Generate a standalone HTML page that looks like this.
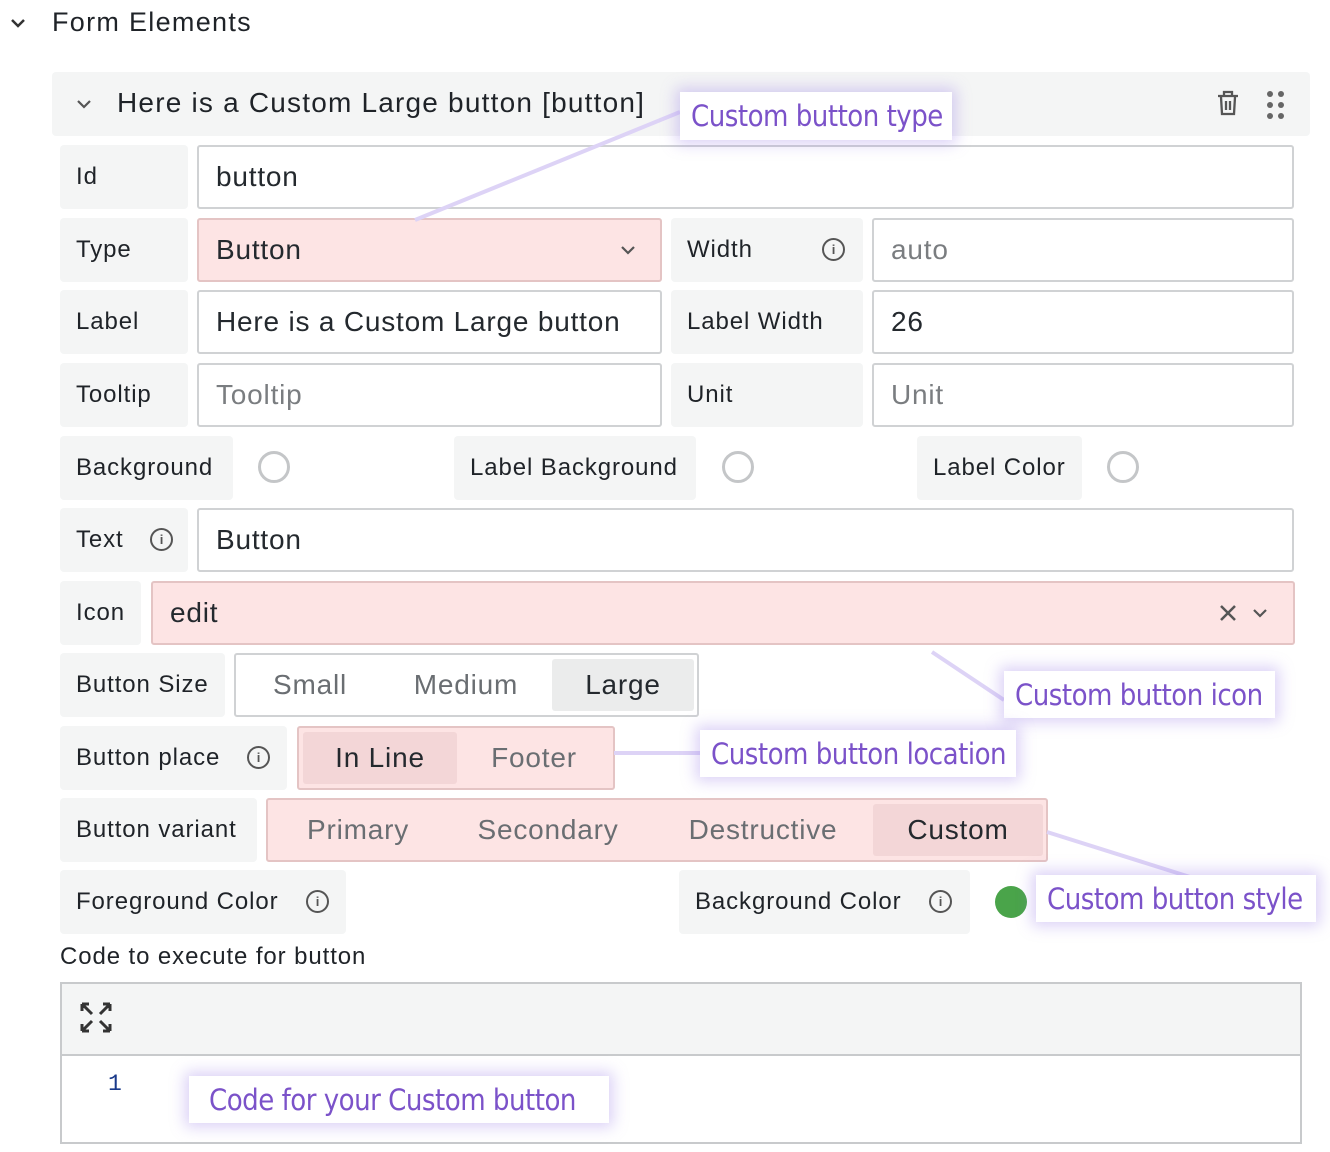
<!DOCTYPE html>
<html><head><meta charset="utf-8">
<style>
*{box-sizing:border-box;margin:0;padding:0}
body{width:1330px;height:1152px;background:#fff;position:relative;overflow:hidden;font-family:"Liberation Sans",sans-serif;color:#24292e}
.a{position:absolute}
.lb{position:absolute;background:#f4f5f5;border-radius:4px;font-size:24px;letter-spacing:0.9px;color:#1f2328;display:flex;align-items:center;padding-left:16px;height:64px;white-space:nowrap}
.in{position:absolute;border:2px solid #d0d2d4;border-radius:3px;background:#fff;font-size:28px;letter-spacing:0.8px;display:flex;align-items:center;padding-left:17px;height:64px;color:#24292e;white-space:nowrap}
.pk{background:#fde4e4;border-color:#e4c4c4}
.ph{color:#7a7d80}
.info{display:inline-block;width:23px;height:23px;border:2px solid #555;border-radius:50%;position:absolute;font-size:13px;text-align:center;line-height:19px;font-weight:bold;color:#555;letter-spacing:0}
.rad{position:absolute;width:32px;height:32px;border:3px solid #c4c6c8;border-radius:50%}
.seg{position:absolute;border:2px solid #d0d2d4;border-radius:3px;height:64px;font-size:28px;letter-spacing:0.8px}
.seg span{position:absolute;top:4px;height:52px;display:flex;align-items:center;justify-content:center;color:#6a6e72;border-radius:3px}
.seg span.on{color:#24292e}
.ann{position:absolute;background:#fff;color:#7b52c9;font-family:"Liberation Sans Narrow","DejaVu Sans Condensed","DejaVu Sans",sans-serif;font-stretch:condensed;font-size:29px;box-shadow:0 0 14px 4px rgba(150,120,230,.35);display:flex;align-items:center;padding-left:11px;white-space:nowrap;letter-spacing:-0.5px}
</style></head><body>
<div class="a" style="left:52px;top:7px;font-size:27px;letter-spacing:1.3px;color:#1f2328">Form Elements</div>
<div class="a" style="left:52px;top:72px;width:1258px;height:64px;background:#f4f5f5;border-radius:4px"></div>
<div class="a" style="left:117px;top:87px;font-size:28px;letter-spacing:1.2px;color:#1f2328;white-space:nowrap">Here is a Custom Large button [button]</div>

<div class="lb" style="left:60px;top:145px;width:128px">Id</div>
<div class="in" style="left:197px;top:145px;width:1097px">button</div>

<div class="lb" style="left:60px;top:218px;width:128px">Type</div>
<div class="in pk" style="left:197px;top:218px;width:465px">Button</div>
<div class="lb" style="left:671px;top:218px;width:192px">Width<span class="info" style="left:151px;top:20px">i</span></div>
<div class="in ph" style="left:872px;top:218px;width:422px">auto</div>

<div class="lb" style="left:60px;top:290px;width:128px">Label</div>
<div class="in" style="left:197px;top:290px;width:465px">Here is a Custom Large button</div>
<div class="lb" style="left:671px;top:290px;width:192px">Label Width</div>
<div class="in" style="left:872px;top:290px;width:422px">26</div>

<div class="lb" style="left:60px;top:363px;width:128px">Tooltip</div>
<div class="in ph" style="left:197px;top:363px;width:465px">Tooltip</div>
<div class="lb" style="left:671px;top:363px;width:192px">Unit</div>
<div class="in ph" style="left:872px;top:363px;width:422px">Unit</div>

<div class="lb" style="left:60px;top:436px;width:173px">Background</div>
<div class="rad" style="left:258px;top:451px"></div>
<div class="lb" style="left:454px;top:436px;width:242px">Label Background</div>
<div class="rad" style="left:722px;top:451px"></div>
<div class="lb" style="left:917px;top:436px;width:165px">Label Color</div>
<div class="rad" style="left:1107px;top:451px"></div>

<div class="lb" style="left:60px;top:508px;width:128px">Text<span class="info" style="left:90px;top:20px">i</span></div>
<div class="in" style="left:197px;top:508px;width:1097px">Button</div>

<div class="lb" style="left:60px;top:581px;width:81px">Icon</div>
<div class="in pk" style="left:151px;top:581px;width:1144px">edit</div>

<div class="lb" style="left:60px;top:653px;width:165px">Button Size</div>
<div class="seg" style="left:234px;top:653px;width:465px">
<span style="left:14px;width:120px">Small</span><span style="left:160px;width:140px">Medium</span><span class="on" style="left:316px;width:142px;background:#ebecec">Large</span></div>

<div class="lb" style="left:60px;top:726px;width:227px">Button place<span class="info" style="left:187px;top:20px">i</span></div>
<div class="seg" style="left:297px;top:726px;width:318px;background:#fde4e4;border-color:#e4c4c4">
<span class="on" style="left:4px;width:154px;background:#f3d6d7">In Line</span><span style="left:160px;width:150px">Footer</span></div>

<div class="lb" style="left:60px;top:798px;width:197px">Button variant</div>
<div class="seg" style="left:266px;top:798px;width:782px;background:#fde4e4;border-color:#e4c4c4">
<span style="left:20px;width:140px">Primary</span><span style="left:190px;width:180px">Secondary</span><span style="left:405px;width:180px">Destructive</span><span class="on" style="left:605px;width:170px;background:#f3d6d7">Custom</span></div>

<div class="lb" style="left:60px;top:870px;width:286px">Foreground Color<span class="info" style="left:246px;top:20px">i</span></div>
<div class="lb" style="left:679px;top:870px;width:291px">Background Color<span class="info" style="left:250px;top:20px">i</span></div>
<div class="a" style="left:995px;top:886px;width:32px;height:32px;border-radius:50%;background:#4aa44a"></div>

<div class="a" style="left:60px;top:943px;font-size:24px;letter-spacing:0.9px;color:#1f2328">Code to execute for button</div>
<div class="a" style="left:60px;top:982px;width:1242px;height:162px;border:2px solid #c8cacc"></div>
<div class="a" style="left:62px;top:984px;width:1238px;height:72px;background:#f4f5f5;border-bottom:2px solid #c8cacc"></div>
<div class="a" style="left:108px;top:1071px;font-size:23px;color:#1a3a8a;font-family:'Liberation Mono',monospace">1</div>

<svg class="a" style="left:0;top:0" width="1330" height="1152">
<line x1="415" y1="220" x2="680" y2="112" stroke="#ddd3f6" stroke-width="4"/>
<line x1="932" y1="652" x2="1004" y2="700" stroke="#ddd3f6" stroke-width="4"/>
<line x1="614" y1="753" x2="700" y2="753" stroke="#ddd3f6" stroke-width="4"/>
<line x1="1047" y1="832" x2="1190" y2="877" stroke="#ddd3f6" stroke-width="4"/>
<polyline points="12,20 18,26 24,20" fill="none" stroke="#333" stroke-width="2.5"/>
<polyline points="78,101 84,107 90,101" fill="none" stroke="#555" stroke-width="2.2"/>
<polyline points="622,247 628,253 634,247" fill="none" stroke="#555" stroke-width="2.2"/>
<polyline points="1254,610 1260,616 1266,610" fill="none" stroke="#555" stroke-width="2.2"/>
<path d="M1221 606 L1235 620 M1235 606 L1221 620" stroke="#555" stroke-width="2.5"/>
<g fill="none" stroke="#555" stroke-width="2.3"><path d="M1218 96 H1238 M1224 96 V92 H1232 V96 M1221 97 L1222 114 H1234 L1235 97 M1226 101 V110 M1230 101 V110"/></g>
<g fill="#666"><circle cx="1270" cy="94" r="3"/><circle cx="1281" cy="94" r="3"/><circle cx="1270" cy="105" r="3"/><circle cx="1281" cy="105" r="3"/><circle cx="1270" cy="116" r="3"/><circle cx="1281" cy="116" r="3"/></g>
<g fill="none" stroke="#333" stroke-width="3"><path d="M82 1004 L92 1014 M82 1004 H89 M82 1004 V1011 M110 1004 L100 1014 M110 1004 H103 M110 1004 V1011 M82 1031 L92 1021 M82 1031 H89 M82 1031 V1024 M110 1031 L100 1021 M110 1031 H103 M110 1031 V1024"/></g>
</svg>

<div class="ann" style="left:680px;top:92px;width:272px;height:48px">Custom button type</div>
<div class="ann" style="left:1004px;top:671px;width:271px;height:47px">Custom button icon</div>
<div class="ann" style="left:700px;top:730px;width:316px;height:47px">Custom button location</div>
<div class="ann" style="left:1036px;top:875px;width:280px;height:47px">Custom button style</div>
<div class="ann" style="left:189px;top:1076px;width:420px;height:47px;padding-left:20px">Code for your Custom button</div>
</body></html>
